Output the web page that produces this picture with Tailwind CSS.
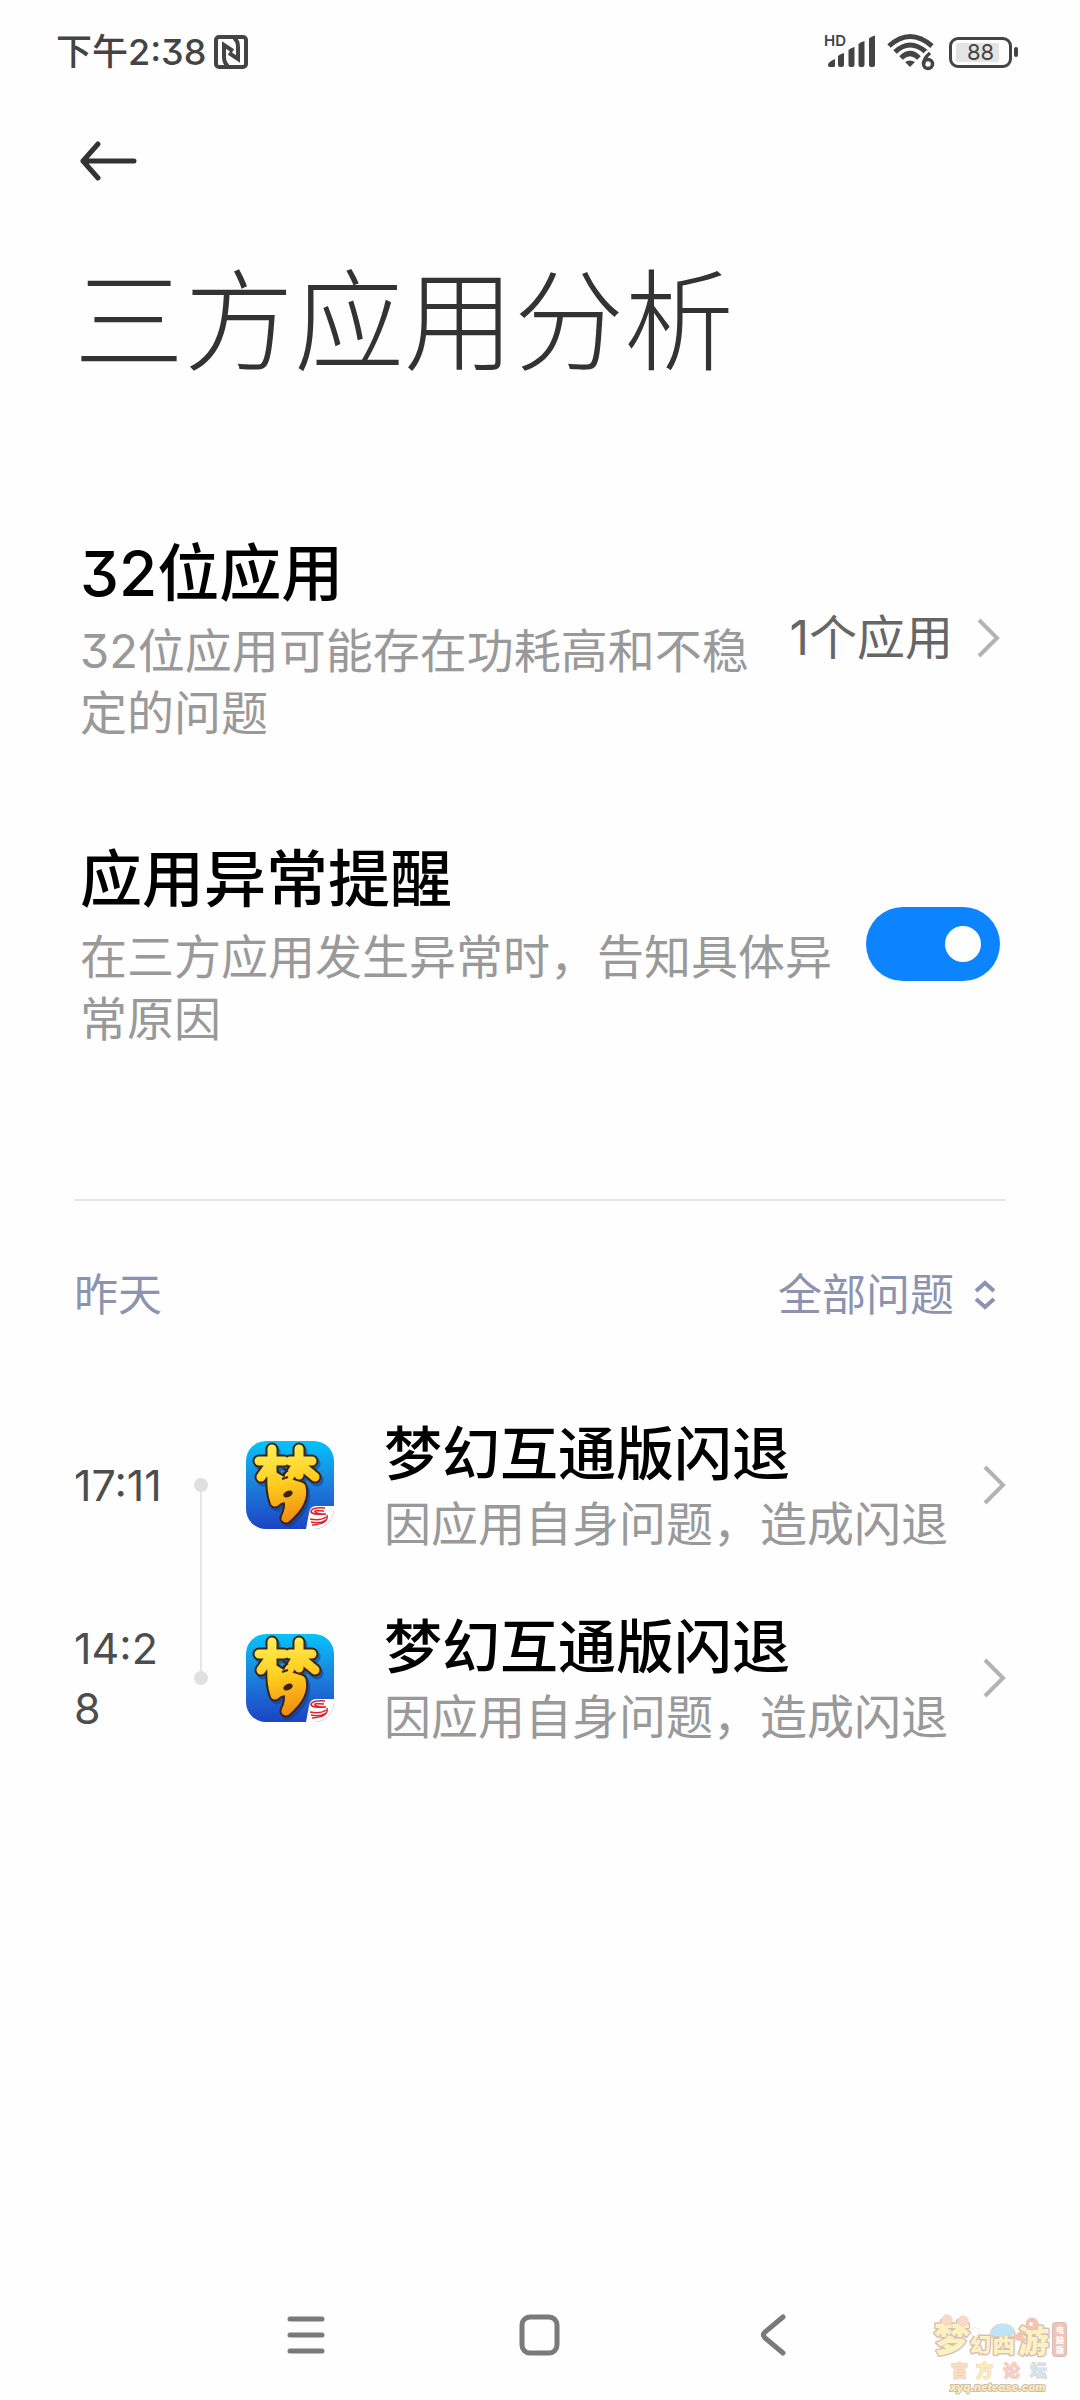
<!DOCTYPE html>
<html lang="zh-CN">
<head>
  <meta charset="UTF-8" />
  <meta name="viewport" content="width=device-width, initial-scale=1.0" />
  <title>三方应用分析</title>
  <script src="https://cdn.jsdelivr.net/npm/@tailwindcss/browser@4"></script>
</head>
<body class="min-h-screen flex flex-col bg-[#fefefe] text-black font-['Inter','Noto_Sans_CJK_SC',sans-serif] [font-feature-settings:'cv09']">

  <!-- Status bar -->
  <div class="flex items-center justify-between h-[104px] pl-[56px] pr-[62px] text-[#444]">
    <div class="flex items-center gap-2">
      <span class="text-[36px] leading-[52px] font-medium">下午2:38</span>
      <svg class="w-[34px] h-[34px]" viewBox="0 0 34 34" fill="none" stroke="currentColor" stroke-width="4">
        <rect x="2" y="2" width="30" height="30" rx="3" />
        <path d="M14 31c-3-2-4-5-4-9V10l9 6M20 3c3 2 4 5 4 9v12l-9-6" />
      </svg>
    </div>
    <div class="flex items-center">
      <svg class="w-[50px] h-[34px] overflow-visible" viewBox="0 0 50 34" fill="currentColor">
        <text x="-2" y="11" font-size="15" font-weight="600" font-family="Inter, sans-serif">HD</text>
        <path d="M2 30q0-3 7-6v6.500q0 1.500-1.500 1.500h-4q-1.500 0-1.500-2zM12 21q2-2 6-3v12q0 2-2 2h-2q-2 0-2-2zM22.500 15q2-2 6-3v18q0 2-2 2h-2q-2 0-2-2zM32.500 9q2-2 6-3v24q0 2-2 2h-2q-2 0-2-2zM43 3.500q2-2 6-3v29.500q0 2-2 2h-2q-2 0-2-2z" />
      </svg>
      <svg class="w-[48px] h-[38px] ml-[11px]" viewBox="0 0 48 38" fill="none" stroke="currentColor" stroke-width="5">
        <path d="M2 13Q23-6 45 13M8 19Q23 5 39 19M14 25Q23 16 32 25" />
        <path d="M18 29q5-3 10 0l-5 5z" fill="currentColor" stroke="none" />
        <path d="M42.500 20.500Q37 26 37 31" stroke="#fefefe" stroke-width="9" />
        <circle cx="41" cy="31" r="6.500" fill="#fefefe" stroke="none" />
        <circle cx="41" cy="31" r="4.500" stroke-width="3.500" />
        <path d="M43 20Q37 25 36.500 31" stroke-width="3.500" />
      </svg>
      <div class="flex items-center ml-[14px] gap-[2px]">
        <div class="w-[63px] h-[31px] rounded-[9px] border-[3px] border-[#444] p-[3px]">
          <div class="w-[43px] h-full mx-[1px] bg-[#e4e4e4] rounded-[2px] flex items-center justify-center pl-[6px] text-[22px] text-[#444]">88</div>
        </div>
        <div class="w-[4px] h-[10px] rounded-[2px] bg-[#444]"></div>
      </div>
    </div>
  </div>

  <!-- Page header -->
  <header class="px-[74px]">
    <button type="button" aria-label="返回" class="block mt-[36px] ml-[6px]">
      <svg class="w-[58px] h-[42px] text-[#333]" viewBox="0 0 58 42" fill="none" stroke="currentColor" stroke-width="5" stroke-linecap="round" stroke-linejoin="round">
        <path d="M54 21H3M18 4L3 21l15 17" />
      </svg>
    </button>
    <h1 class="mt-[60px] text-[110px] leading-[160px] font-light text-[#333]">三方应用分析</h1>
  </header>

  <!-- Settings -->
  <main class="flex-1">
    <a href="#apps32" class="flex items-center mt-[130px] px-20">
      <div class="flex-1">
        <h2 class="text-[62px] leading-[84px] font-medium">32位应用</h2>
        <p class="mt-1 text-[47px] leading-[62px] text-[#999]">32位应用可能存在功耗高和不稳定的问题</p>
      </div>
      <span class="ml-[20px] shrink-0 text-[48px] leading-[62px] text-[#666]">1个应用</span>
      <svg class="w-[24px] h-[42px] ml-[23px] shrink-0 text-[#b3b3b3]" viewBox="0 0 24 42" fill="none" stroke="currentColor" stroke-width="4">
        <path d="M3 3l18 18L3 39" />
      </svg>
    </a>

    <div class="flex items-center justify-between mt-[94px] px-20">
      <label for="crashAlert" class="flex-1">
        <span class="block text-[62px] leading-[84px] font-medium">应用异常提醒</span>
        <span class="block mt-1 text-[47px] leading-[62px] text-[#999]">在三方应用发生异常时，告知具体异常原因</span>
      </label>
      <input id="crashAlert" type="checkbox" checked class="appearance-none shrink-0 ml-[30px] w-[134px] h-[74px] rounded-full bg-[#ccc] checked:bg-[#0d84ff] flex items-center px-[19px] checked:justify-end before:content-[''] before:w-[36px] before:h-[36px] before:rounded-full before:bg-white" />
    </div>

    <hr class="mx-[74px] mt-[149px] border-t-2 border-[#e6e6e6]" />

    <!-- Issue list -->
    <section class="pl-[74px] pr-[74px]">
      <div class="flex items-center justify-between h-[187px] pr-[10px] text-[44px] leading-[62px] text-[#8c93b0]">
        <h3>昨天</h3>
        <label class="flex items-center gap-[20px]">
          <select aria-label="问题类型" class="appearance-none bg-transparent">
            <option>全部问题</option>
          </select>
          <svg class="w-[22px] h-[30px]" viewBox="0 0 22 30" fill="none" stroke="currentColor" stroke-width="4">
            <path d="M2 11l9-8 9 8M2 19l9 8 9-8" />
          </svg>
        </label>
      </div>

      <ul>
        <li>
          <a href="#issue-1711" class="flex items-center h-[193px]">
            <time class="w-[100px] text-[43px] leading-[60px] text-[#4d4d4d] break-all">17:11</time>
            <span class="self-stretch flex flex-col items-center w-[14px] ml-[20px]">
              <span class="flex-1"></span>
              <span class="w-[14px] h-[14px] rounded-full bg-[#e0e0e0]"></span>
              <span class="flex-1 w-[2px] bg-[#e6e6e6]"></span>
            </span>
            <svg class="w-[88px] h-[88px] ml-[38px] shrink-0" viewBox="0 0 88 88" role="img" aria-label="梦幻互通版">
              <defs>
                <linearGradient id="sky" x1="0" y1="0" x2="0" y2="1">
                  <stop offset="0" stop-color="#06c3fa" />
                  <stop offset="0.500" stop-color="#1c7fdc" />
                  <stop offset="1" stop-color="#1c44c4" />
                </linearGradient>
                <linearGradient id="gold" gradientUnits="userSpaceOnUse" x1="30" y1="5" x2="44" y2="80">
                  <stop offset="0" stop-color="#ffee55" />
                  <stop offset="0.500" stop-color="#ffcc1e" />
                  <stop offset="1" stop-color="#f08c12" />
                </linearGradient>
                <clipPath id="tile"><rect width="88" height="88" rx="20" /></clipPath>
                <!-- brush strokes of the game emblem -->
                <g id="emblem" stroke-linecap="round" stroke-linejoin="round">
                  <path d="M13 20H38M26 8V36M23 25L15 36M44 20H66M53 8V34M50 25L43 36M57 26L69 36" fill="none" />
                  <path d="M26 34L36 40L55 46Q59 61 40 77Q45 67 43 58Q36 54 29 61Q25 50 26 34z" />
                </g>
                <g id="appIcon">
                  <g clip-path="url(#tile)">
                    <rect width="88" height="88" fill="url(#sky)" />
                    <path d="M88 65H70q-6 0-7 7l-3 16h28z" fill="#fff" />
                    <use href="#emblem" stroke="#12357f" fill="#12357f" opacity="0.500" stroke-width="13" x="2" y="3" />
                  </g>
                  <use href="#emblem" stroke="#3a2414" fill="#3a2414" stroke-width="13" />
                  <use href="#emblem" stroke="url(#gold)" fill="url(#gold)" stroke-width="9" />
                  <ellipse cx="42" cy="53" rx="5" ry="3" fill="#3a2414" transform="rotate(-25 42 53)" />
                  <path d="M37 27l4 3-4 3M36 38l6-2" fill="none" stroke="#3a2414" stroke-width="2" />
                  <path d="M79 67q-14-1-14 4 2 3 15 2M78 70q-11-1-9 1 3 2 11 2M81 74q2 9-15 10M80 76q-5 4-16 2M80 79q-6 4-15 2" fill="none" stroke="#e0202c" stroke-width="1.500" />
                </g>
              </defs>
              <use href="#appIcon" />
            </svg>
            <span class="flex-1 ml-[50px]">
              <span class="block text-[58px] leading-[78px] font-medium">梦幻互通版闪退</span>
              <span class="block text-[47px] leading-[62px] text-[#999]">因应用自身问题，造成闪退</span>
            </span>
            <svg class="w-[24px] h-[42px] shrink-0 text-[#b3b3b3]" viewBox="0 0 24 42" fill="none" stroke="currentColor" stroke-width="4">
              <path d="M3 3l18 18L3 39" />
            </svg>
          </a>
        </li>
        <li>
          <a href="#issue-1428" class="flex items-center h-[193px]">
            <time class="w-[100px] text-[43px] leading-[60px] text-[#4d4d4d] break-all">14:28</time>
            <span class="self-stretch flex flex-col items-center w-[14px] ml-[20px]">
              <span class="flex-1 w-[2px] bg-[#e6e6e6]"></span>
              <span class="w-[14px] h-[14px] rounded-full bg-[#e0e0e0]"></span>
              <span class="flex-1"></span>
            </span>
            <svg class="w-[88px] h-[88px] ml-[38px] shrink-0" viewBox="0 0 88 88" role="img" aria-label="梦幻互通版">
              <use href="#appIcon" />
            </svg>
            <span class="flex-1 ml-[50px]">
              <span class="block text-[58px] leading-[78px] font-medium">梦幻互通版闪退</span>
              <span class="block text-[47px] leading-[62px] text-[#999]">因应用自身问题，造成闪退</span>
            </span>
            <svg class="w-[24px] h-[42px] shrink-0 text-[#b3b3b3]" viewBox="0 0 24 42" fill="none" stroke="currentColor" stroke-width="4">
              <path d="M3 3l18 18L3 39" />
            </svg>
          </a>
        </li>
      </ul>
    </section>
  </main>

  <!-- System navigation -->
  <nav class="relative flex items-center justify-center gap-[190px] h-[130px] text-[#7a7a7a]">
    <button type="button" aria-label="最近任务">
      <svg class="w-[44px] h-[44px]" viewBox="0 0 44 44" fill="none" stroke="currentColor" stroke-width="5" stroke-linecap="round">
        <path d="M6 6h32M6 22h32M6 38h32" />
      </svg>
    </button>
    <button type="button" aria-label="主屏幕">
      <svg class="w-[44px] h-[44px]" viewBox="0 0 44 44" fill="none" stroke="currentColor" stroke-width="5">
        <rect x="4" y="4" width="35" height="36" rx="8" />
      </svg>
    </button>
    <button type="button" aria-label="返回">
      <svg class="w-[44px] h-[44px]" viewBox="0 0 44 44" fill="none" stroke="currentColor" stroke-width="5" stroke-linecap="round">
        <path d="M31 4L13 19q-3 3 0 6l18 15" />
      </svg>
    </button>

    <!-- Forum watermark -->
    <svg class="absolute right-[8px] bottom-[6px] w-[138px] h-[80px] opacity-55 overflow-visible" viewBox="0 0 138 80" font-family="'Noto Sans CJK SC', sans-serif" font-weight="900" stroke-linejoin="round" paint-order="stroke">
      <g fill="#fce98c" stroke="#b98c86" stroke-width="3">
        <text x="0" y="38" font-size="36">梦</text>
        <text x="36" y="38" font-size="21">幻</text>
        <text x="58" y="38" font-size="23">西</text>
        <text x="84" y="38" font-size="31">游</text>
      </g>
      <g stroke="#c9967f" stroke-width="1">
        <circle cx="13" cy="6" r="5" fill="#f8bc96" />
        <circle cx="29" cy="7" r="5" fill="#f8bc96" />
        <circle cx="41" cy="18" r="4" fill="#fff" />
        <path d="M56 20q2-9 11-10 11-1 14 8-4 5-10 3-8 3-15-1z" fill="#8fd0ef" />
        <circle cx="98" cy="10" r="6" fill="#f4936c" />
        <circle cx="97" cy="10" r="2" fill="#fff" />
        <path d="M78 24l9-7 3 11z" fill="#f4936c" />
      </g>
      <rect x="119" y="9" width="13" height="33" rx="3" fill="#e5967a" stroke="#b9867a" stroke-width="2" />
      <g fill="#fff" font-size="8">
        <text x="122" y="19">电</text>
        <text x="122" y="29">脑</text>
        <text x="122" y="39">版</text>
      </g>
      <g font-size="17" stroke="#d9a58c" stroke-width="1">
        <text x="17" y="63" fill="#f6c58c">官</text>
        <text x="42" y="63" fill="#fbe07a">方</text>
        <text x="69" y="63" fill="#f4a98c">论</text>
        <text x="96" y="63" fill="#a8d4ea">坛</text>
      </g>
      <text x="16" y="77" font-size="11" font-family="Inter, sans-serif" font-style="italic" font-weight="800" fill="#fbe07a" stroke="#a58670" stroke-width="2">xyq.netease.com</text>
    </svg>
  </nav>
</body>
</html>
